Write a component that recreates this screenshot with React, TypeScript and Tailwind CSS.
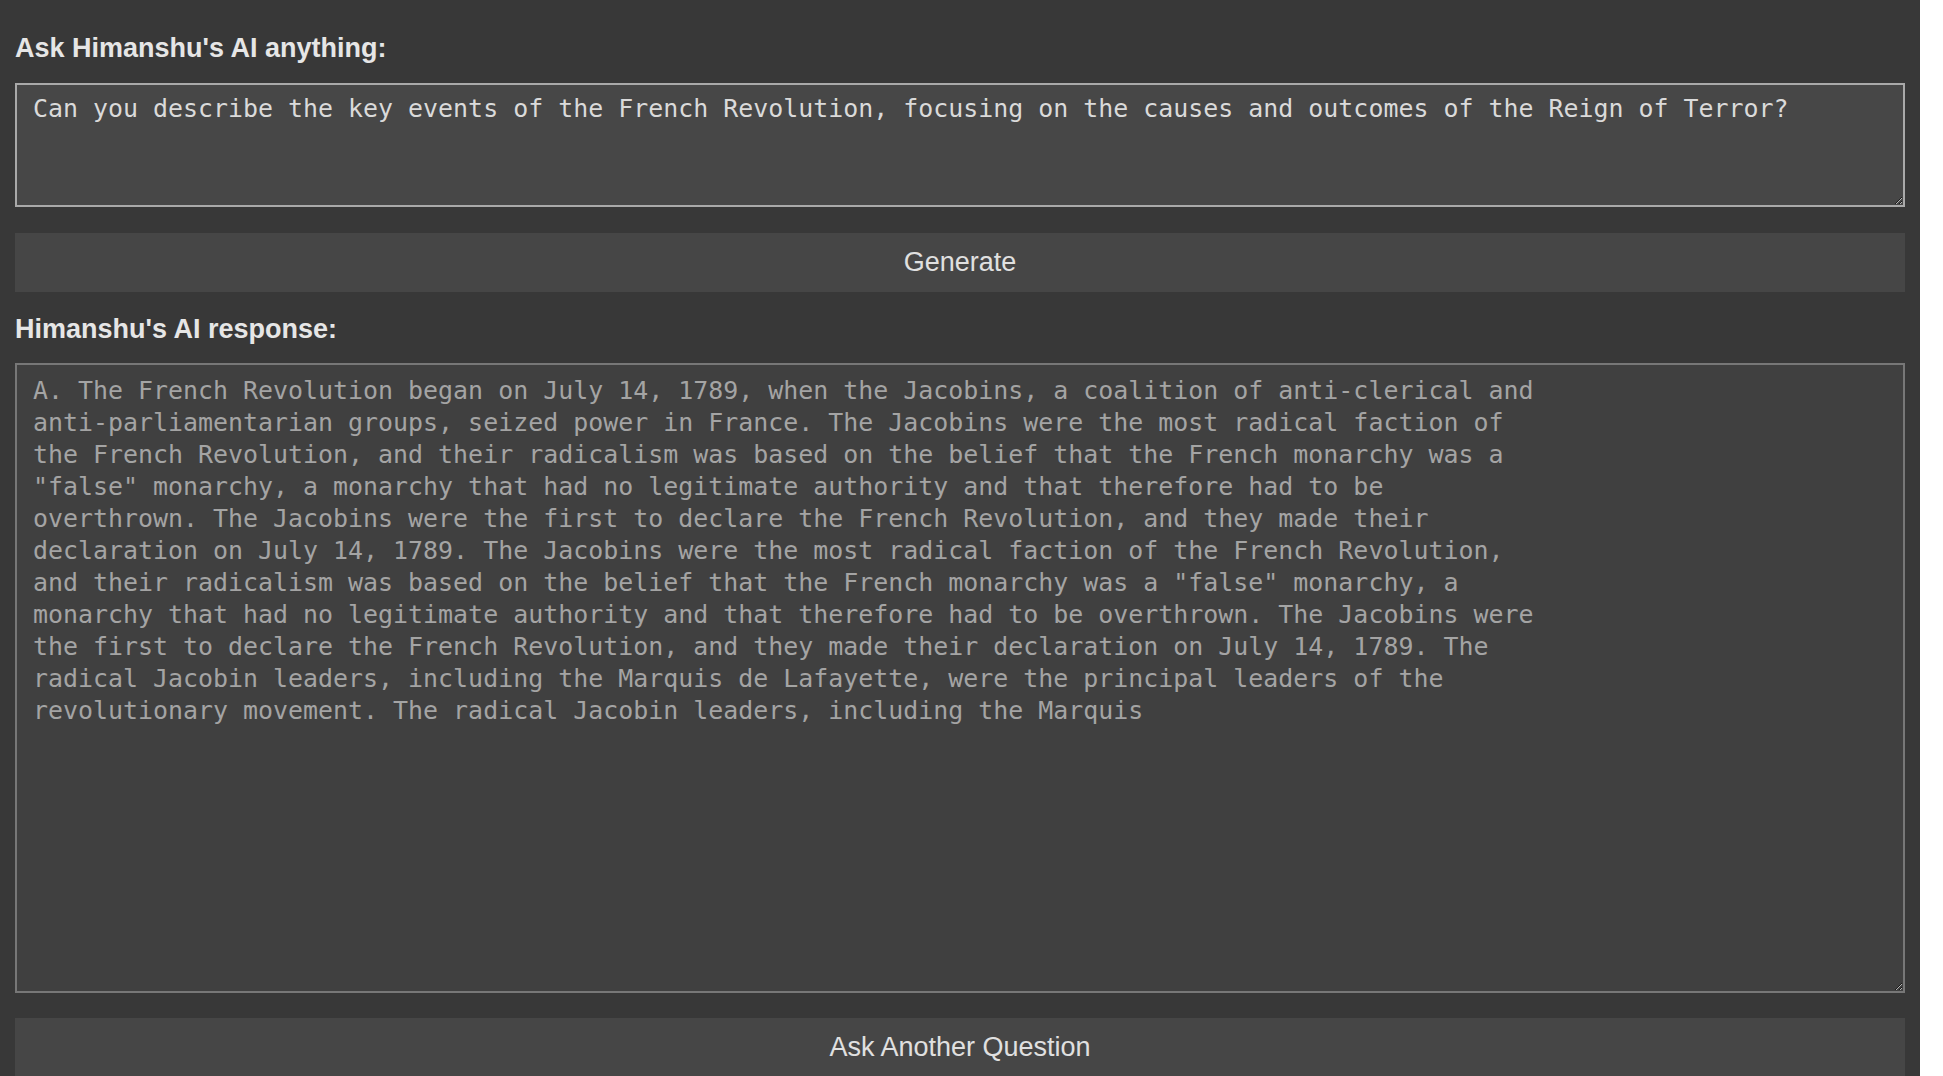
const question =
  'Can you describe the key events of the French Revolution, focusing on the causes and outcomes of the Reign of Terror?'

const answer = [
  'A. The French Revolution began on July 14, 1789, when the Jacobins, a coalition of anti-clerical and',
  'anti-parliamentarian groups, seized power in France. The Jacobins were the most radical faction of',
  'the French Revolution, and their radicalism was based on the belief that the French monarchy was a',
  '"false" monarchy, a monarchy that had no legitimate authority and that therefore had to be',
  'overthrown. The Jacobins were the first to declare the French Revolution, and they made their',
  'declaration on July 14, 1789. The Jacobins were the most radical faction of the French Revolution,',
  'and their radicalism was based on the belief that the French monarchy was a "false" monarchy, a',
  'monarchy that had no legitimate authority and that therefore had to be overthrown. The Jacobins were',
  'the first to declare the French Revolution, and they made their declaration on July 14, 1789. The',
  'radical Jacobin leaders, including the Marquis de Lafayette, were the principal leaders of the',
  'revolutionary movement. The radical Jacobin leaders, including the Marquis',
].join('\n')

function Label({ children }: { children: string }) {
  return (
    <label className="block h-[36px] text-[27px] leading-[36px] font-bold text-[#e6e6e6]">
      {children}
    </label>
  )
}

function WideButton({ children }: { children: string }) {
  return (
    <button
      type="button"
      className="block h-[59px] w-full shrink-0 bg-[#464646] text-[27px] text-[#e0e0e0] hover:bg-[#4d4d4d]"
    >
      {children}
    </button>
  )
}

export default function App() {
  return (
    <div className="h-screen overflow-hidden bg-white font-['Liberation_Sans',Arial,sans-serif]">
      <div className="flex h-full w-[1920px] flex-col bg-[#383838] px-[15px] pt-[30px]">
        <Label>Ask Himanshu's AI anything:</Label>
        <textarea
          defaultValue={question}
          className="mt-[17px] block h-[124px] w-full shrink-0 border-2 border-[#a9a9a9] bg-[#474747] px-[16px] pt-[8px] font-['DejaVu_Sans_Mono',monospace] text-[24.93px] leading-[32px] text-[#dadada] outline-none [color-scheme:dark]"
        />
        <div className="mt-[26px]">
          <WideButton>Generate</WideButton>
        </div>
        <div className="mt-[19px]">
          <Label>Himanshu's AI response:</Label>
        </div>
        <textarea
          readOnly
          value={answer}
          className="mt-[16px] block h-[630px] w-full shrink-0 border-2 border-[#777777] bg-[#404040] px-[16px] pt-[10px] font-['DejaVu_Sans_Mono',monospace] text-[24.93px] leading-[32px] text-[#a4a4a4] outline-none [color-scheme:dark]"
        />
        <div className="mt-[25px]">
          <WideButton>Ask Another Question</WideButton>
        </div>
      </div>
    </div>
  )
}
